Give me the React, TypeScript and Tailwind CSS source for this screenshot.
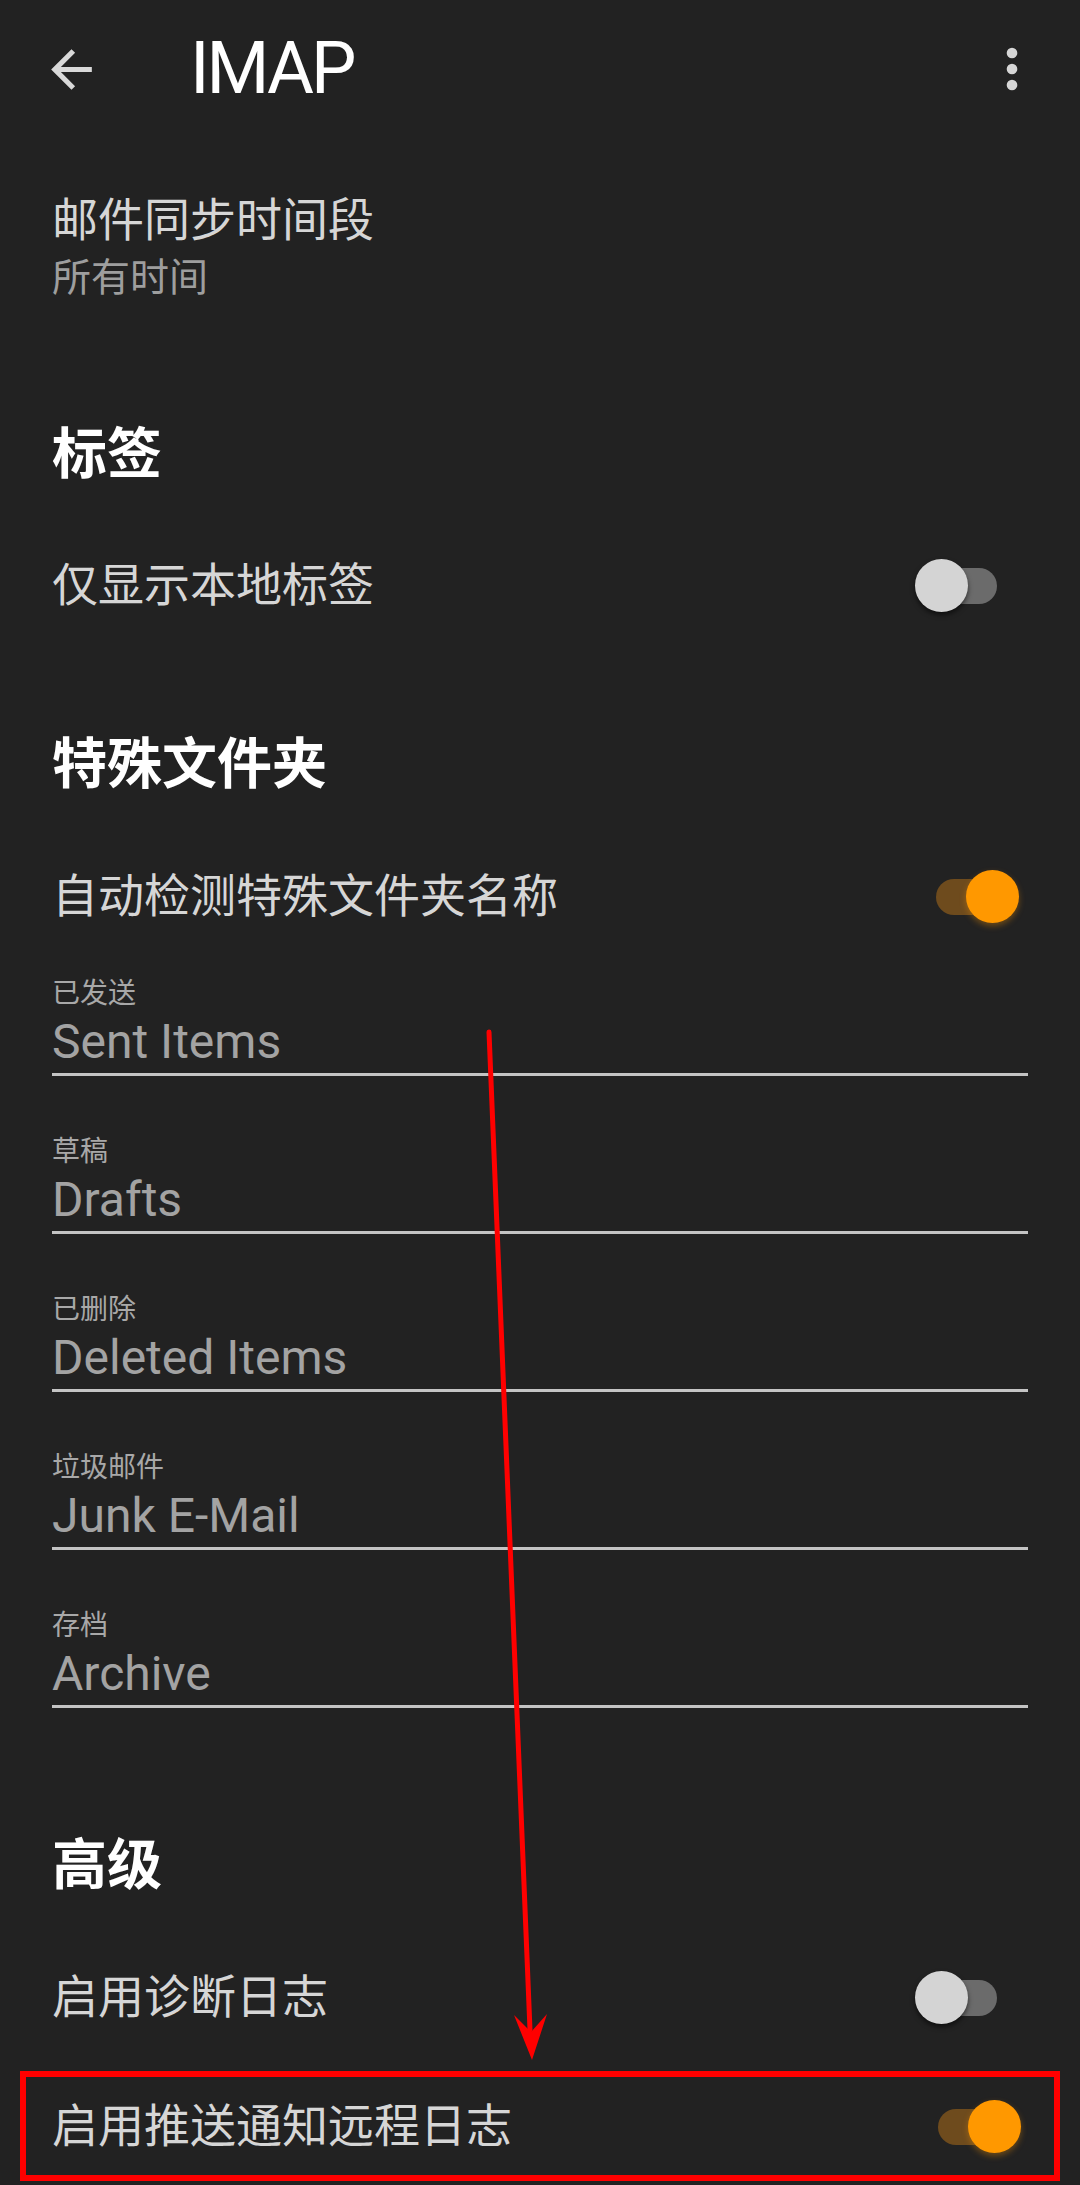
import React from 'react'

const folders = [
  { label: '已发送', value: 'Sent Items' },
  { label: '草稿', value: 'Drafts' },
  { label: '已删除', value: 'Deleted Items' },
  { label: '垃圾邮件', value: 'Junk E-Mail' },
  { label: '存档', value: 'Archive' },
]

function Toggle({ on }: { on: boolean }) {
  return (
    <div className="relative w-[104px] h-[53px] shrink-0 mr-[9px]">
      <div
        className={`absolute left-[21px] top-[9px] w-[61px] h-[36px] rounded-full ${
          on ? 'bg-[#6e4b1d]' : 'bg-[#6b6b6b]'
        }`}
      />
      <div
        className={`absolute top-0 w-[53px] h-[53px] rounded-full ${
          on
            ? 'left-[51px] bg-[#ff9800] shadow-[0_3px_6px_rgba(255,152,0,0.35)]'
            : 'left-0 bg-[#d4d4d4] shadow-[0_3px_5px_rgba(0,0,0,0.55)]'
        }`}
      />
    </div>
  )
}

function SwitchRow({ title, on }: { title: string; on: boolean }) {
  return (
    <div className="flex items-center justify-between h-[104px]">
      <span className="text-[46px] leading-[46px] text-[#d6d6d6]">{title}</span>
      <Toggle on={on} />
    </div>
  )
}

function SectionTitle({ children, className }: { children: React.ReactNode; className?: string }) {
  return <h2 className={`text-[55px] leading-[55px] font-bold text-white ${className ?? ''}`}>{children}</h2>
}

function FolderField({ label, value }: { label: string; value: string }) {
  return (
    <div className="flex flex-col">
      <div className="text-[28px] leading-[28px] text-[#a8a8a8]">{label}</div>
      <div className="mt-[10px] text-[48px] leading-[48px] text-[#a3a3a3]">{value}</div>
      <div className="mt-[7px] h-[3px] bg-[#c4c4c4]" />
    </div>
  )
}

export default function App() {
  return (
    <div className="relative w-[1080px] h-[2185px] overflow-hidden bg-[#222222] font-[Roboto,'Noto_Sans_CJK_SC',sans-serif]">
      {/* Toolbar */}
      <div className="flex items-center h-[138px] pl-[41px] pr-[36px]">
        <svg viewBox="0 0 24 24" className="w-[61px] h-[61px] fill-[#d9d9d9]">
          <path d="M20 11H7.83l5.59-5.59L12 4l-8 8 8 8 1.41-1.41L7.83 13H20v-2z" />
        </svg>
        <h1 className="ml-[88px] text-[72px] leading-[72px] tracking-[-3px] text-white">IMAP</h1>
        <svg viewBox="0 0 24 24" className="ml-auto w-[64px] h-[64px] fill-[#d6d6d6]">
          <circle cx="12" cy="6" r="2" />
          <circle cx="12" cy="12" r="2" />
          <circle cx="12" cy="18" r="2" />
        </svg>
      </div>

      <div className="flex flex-col px-[52px]">
        {/* Sync window */}
        <div className="pt-[59px] flex flex-col">
          <span className="text-[46px] leading-[46px] text-[#d6d6d6]">邮件同步时间段</span>
          <span className="mt-[16px] text-[39px] leading-[39px] text-[#9e9e9e]">所有时间</span>
        </div>

        {/* Labels */}
        <SectionTitle className="mt-[129px]">标签</SectionTitle>
        <div className="mt-[51px]">
          <SwitchRow title="仅显示本地标签" on={false} />
        </div>

        {/* Special folders */}
        <SectionTitle className="mt-[100px]">特殊文件夹</SectionTitle>
        <div className="mt-[52px]">
          <SwitchRow title="自动检测特殊文件夹名称" on={true} />
        </div>
        <div className="mt-[32px] flex flex-col gap-[62px]">
          {folders.map((f) => (
            <FolderField key={f.label} label={f.label} value={f.value} />
          ))}
        </div>

        {/* Advanced */}
        <SectionTitle className="mt-[130px]">高级</SectionTitle>
        <div className="mt-[52px]">
          <SwitchRow title="启用诊断日志" on={false} />
        </div>
      </div>

      {/* Highlighted row */}
      <div className="mt-[22px] mx-[20px] h-[110px] border-[6px] border-[#ff0000] flex items-center justify-between pl-[26px] pr-[24px]">
        <span className="text-[46px] leading-[46px] text-[#d6d6d6]">启用推送通知远程日志</span>
        <Toggle on={true} />
      </div>

      {/* Annotation arrow */}
      <svg className="absolute inset-0 pointer-events-none" width="1080" height="2185" viewBox="0 0 1080 2185">
        <line x1="489" y1="1032" x2="530" y2="2030" stroke="#ff0000" strokeWidth="5" strokeLinecap="round" />
        <polygon points="514,2015 531,2032 547,2014 532,2060" fill="#ff0000" />
      </svg>
    </div>
  )
}
